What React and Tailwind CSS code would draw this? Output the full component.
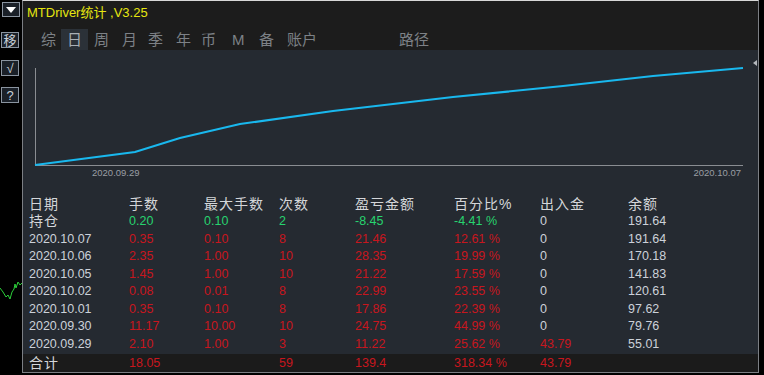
import React from "react";

const RED = "text-[#c8161e]";
const GREEN = "text-[#27d36f]";
const WHITE = "text-[#ccd1d9]";

const rows = [
  { d: "持仓", cn: true, c: GREEN, v: ["0.20", "0.10", "2", "-8.45", "-4.41 %"], io: "0", ioc: WHITE, bal: "191.64" },
  { d: "2020.10.07", c: RED, v: ["0.35", "0.10", "8", "21.46", "12.61 %"], io: "0", ioc: WHITE, bal: "191.64" },
  { d: "2020.10.06", c: RED, v: ["2.35", "1.00", "10", "28.35", "19.99 %"], io: "0", ioc: WHITE, bal: "170.18" },
  { d: "2020.10.05", c: RED, v: ["1.45", "1.00", "10", "21.22", "17.59 %"], io: "0", ioc: WHITE, bal: "141.83" },
  { d: "2020.10.02", c: RED, v: ["0.08", "0.01", "8", "22.99", "23.55 %"], io: "0", ioc: WHITE, bal: "120.61" },
  { d: "2020.10.01", c: RED, v: ["0.35", "0.10", "8", "17.86", "22.39 %"], io: "0", ioc: WHITE, bal: "97.62" },
  { d: "2020.09.30", c: RED, v: ["11.17", "10.00", "10", "24.75", "44.99 %"], io: "0", ioc: WHITE, bal: "79.76" },
  { d: "2020.09.29", c: RED, v: ["2.10", "1.00", "3", "11.22", "25.62 %"], io: "43.79", ioc: RED, bal: "55.01" },
];

const grid = "grid grid-cols-[100px_75px_75px_76px_99px_86px_88px_1fr] pl-[6px] items-center";
const font = { fontFamily: '"Liberation Sans", "Noto Sans CJK SC", sans-serif' };

function SideBtn({ children }) {
  return (
    <div className="w-[18px] h-[16px] ml-[1px] border border-[#8a94a0] bg-[#1a2028] flex items-center justify-center text-[#c9d0d8] text-[13px] leading-none">
      {children}
    </div>
  );
}

export default function App() {
  const tabs = [
    { t: "综", w: 26 },
    { t: "日", w: 27, active: true },
    { t: "周", w: 28 },
    { t: "月", w: 26 },
    { t: "季", w: 28 },
    { t: "年", w: 25 },
    { t: "币", w: 31 },
    { t: "M", w: 27 },
    { t: "备", w: 28 },
    { t: "账户", w: 112 },
    { t: "路径", w: 40 },
  ];
  return (
    <div className="w-[764px] h-[375px] bg-black flex overflow-hidden" style={font}>
      {/* left strip */}
      <div className="w-[22px] h-full flex flex-col relative">
        <div className="mt-[2px] w-[18px] h-[15px] ml-[2px] border border-[#8a94a0] bg-[#1a2028] flex items-center justify-center">
          <svg width="10" height="6" viewBox="0 0 10 6"><path d="M0 0 L10 0 L5 6 Z" fill="#ffffff" /></svg>
        </div>
        <div className="mt-[15px]"><SideBtn>移</SideBtn></div>
        <div className="mt-[12px]"><SideBtn>√</SideBtn></div>
        <div className="mt-[11px]"><SideBtn>?</SideBtn></div>
        <svg className="absolute left-0 top-[282px]" width="22" height="24" viewBox="0 0 22 24">
          <polyline points="0,6 3,10 6,15 8,13 10,17 12,10 14,7 15,2 16,6 18,0 20,3 22,1" fill="none" stroke="#2ccf3a" strokeWidth="1" />
        </svg>
      </div>
      {/* main panel */}
      <div className="w-[737px] h-[373px] border-l border-r border-b border-[#7c7f84] border-t border-t-[#d8d8d8] flex flex-col">
        <div className="h-[49px] bg-[#1c1c1c] flex flex-col">
          <div className="h-[22px] pl-[4px] pt-[3px] text-[#e6e610] text-[13px] leading-[18px]">MTDriver统计 ,V3.25</div>
          <div className="flex items-end h-[27px] pl-[12px]">
            {tabs.map((x) => (
              <div
                key={x.t}
                style={{ width: x.w }}
                className={
                  "h-[21px] flex items-center text-[15px] leading-none text-[#7d8186] " +
                  (x.active ? "bg-[#2b3138] text-[#a9afb6] pl-[6px]" : "pl-[6px]")
                }
              >
                {x.t}
              </div>
            ))}
          </div>
        </div>
        <div className="flex-1 bg-[#252a31] flex flex-col">
          <div className="h-[145px] relative">
            <svg width="735" height="145" viewBox="0 0 735 145" className="block">
              <line x1="12.5" y1="18" x2="12.5" y2="115" stroke="#8a8d92" strokeWidth="1" />
              <line x1="12" y1="115.5" x2="720" y2="115.5" stroke="#8a8d92" strokeWidth="1" />
              <polyline
                points="12,115 112,102 157,88 217,74 310,61 430,47 540,36 630,26 720,18"
                fill="none"
                stroke="#19b8ee"
                strokeWidth="2.2"
              />
              <path d="M730 13 L734 10 L734 16 Z" fill="#b5b9be" />
              <text x="69" y="126" fontSize="9.5" fill="#9a9ea4" fontFamily="Liberation Sans, sans-serif">2020.09.29</text>
              <text x="718" y="126" fontSize="9.5" fill="#9a9ea4" textAnchor="end" fontFamily="Liberation Sans, sans-serif">2020.10.07</text>
            </svg>
          </div>
          <div className={grid + " h-[17.5px] text-[14px] text-[#d4d6d9] tracking-[1px] leading-none"}>
            <div>日期</div>
            <div>手数</div>
            <div>最大手数</div>
            <div>次数</div>
            <div>盈亏金额</div>
            <div>百分比%</div>
            <div>出入金</div>
            <div>余额</div>
          </div>
          {rows.map((r) => (
            <div key={r.d} className={grid + " h-[17.5px] text-[12.5px] leading-none"}>
              <div className={r.cn ? "text-[14px] text-[#d4d6d9] tracking-[1px]" : WHITE}>{r.d}</div>
              {r.v.map((v, i) => (
                <div key={i} className={r.c}>{v}</div>
              ))}
              <div className={r.ioc}>{r.io}</div>
              <div className={WHITE}>{r.bal}</div>
            </div>
          ))}
        </div>
        <div className={grid + " h-[18px] bg-[#1b1b1b] text-[12.5px] leading-none"}>
          <div className="text-[14px] text-[#d4d6d9] tracking-[1px]">合计</div>
          <div className={RED}>18.05</div>
          <div></div>
          <div className={RED}>59</div>
          <div className={RED}>139.4</div>
          <div className={RED}>318.34 %</div>
          <div className={RED}>43.79</div>
          <div></div>
        </div>
      </div>
    </div>
  );
}
